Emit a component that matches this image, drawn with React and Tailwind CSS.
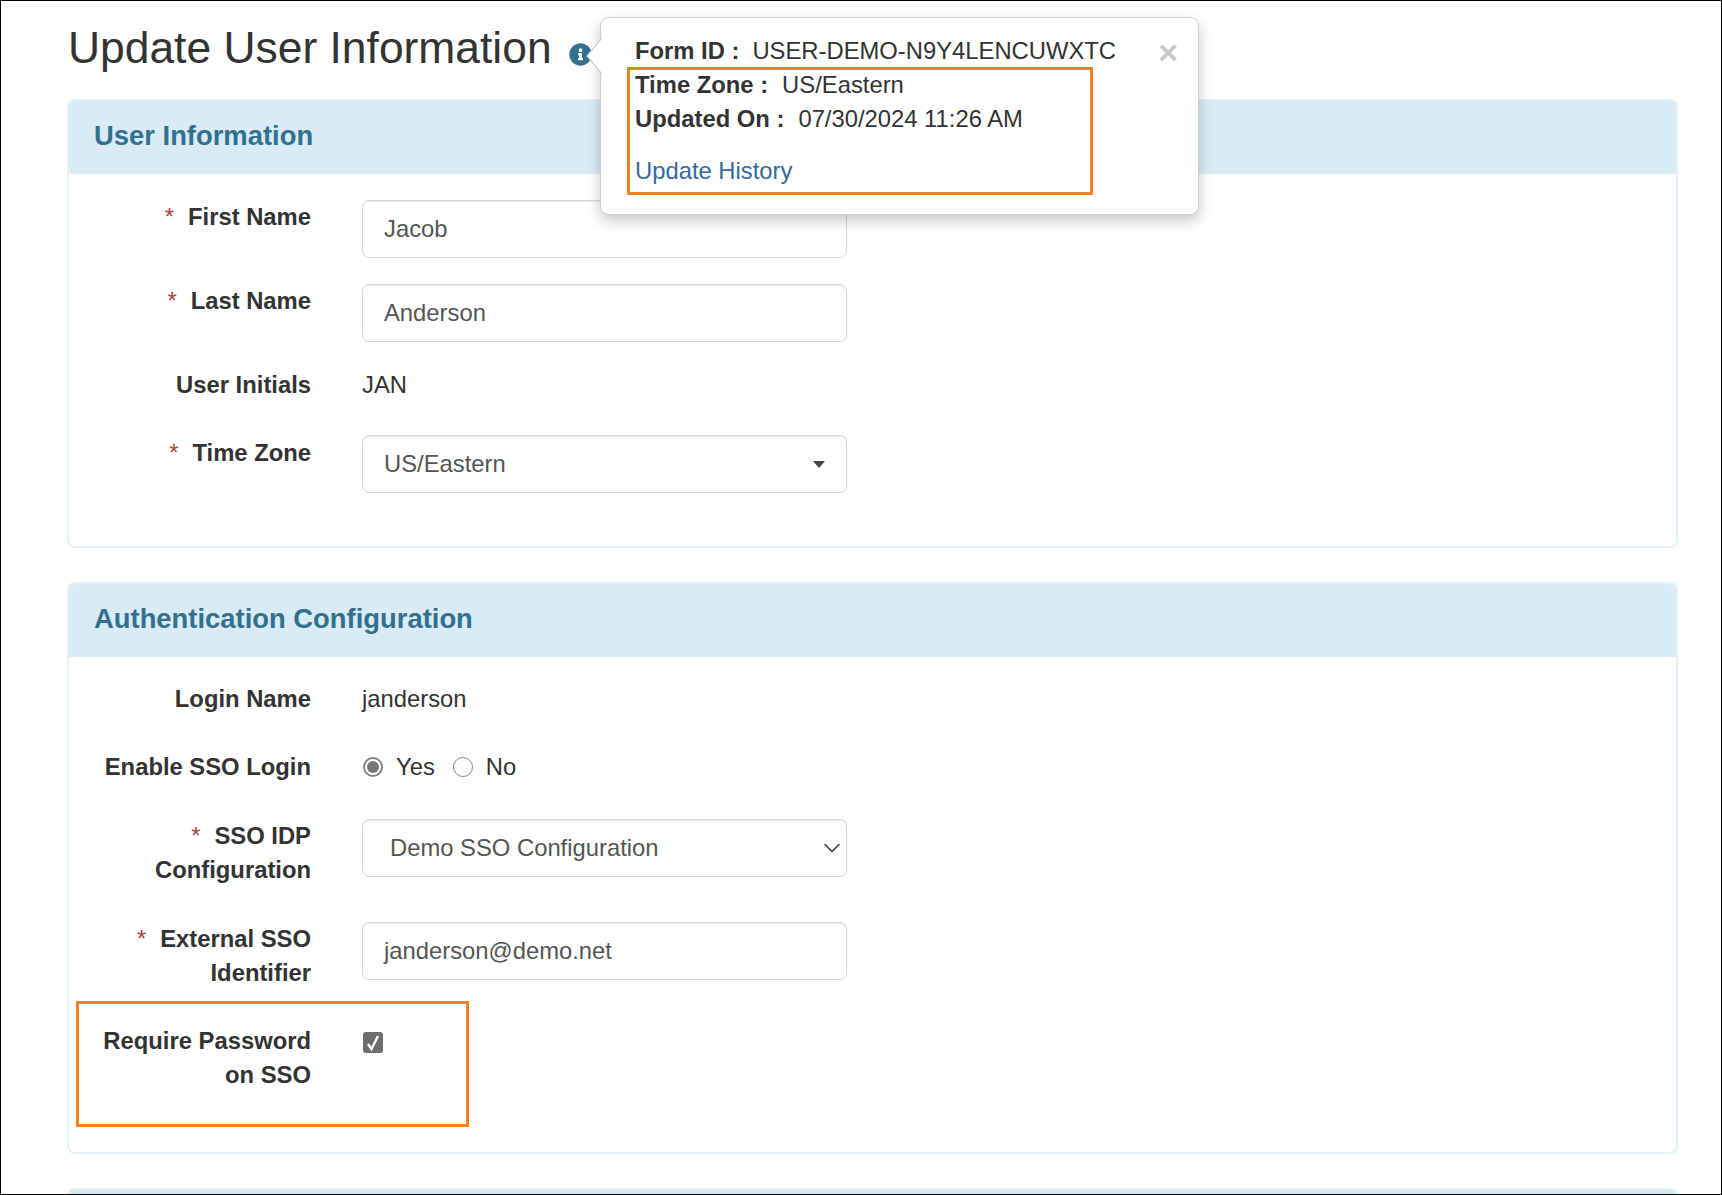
import { FaInfoCircle } from "react-icons/fa";
import { ChevronDown } from "lucide-react";

function Row({ label, required, className, labelClass, children }) {
  return (
    <div className={`flex items-start ${className}`}>
      <div className={`w-[242px] shrink-0 text-right font-bold leading-[34px] text-[#333] ${labelClass}`}>
        {required && <span className="mr-[14px] font-normal text-[#a94442]">*</span>}
        {label}
      </div>
      <div className="ml-[51px] w-[485px]">{children}</div>
    </div>
  );
}

function Field({ children, className }) {
  return (
    <div
      className={`flex h-[58px] items-center rounded-[7px] border border-[#d6d6d6] bg-white text-[#555] shadow-[inset_0_1px_1px_rgba(0,0,0,0.075)] ${className}`}
    >
      {children}
    </div>
  );
}

function Panel({ title, className, bodyClass, children }) {
  return (
    <section
      className={`overflow-hidden rounded-[8px] border-2 border-[#e2f1f6] ${className}`}
    >
      <div className="flex h-[73px] items-center bg-[#d9ecf6] pb-[3px] pl-[25px] text-[27.4px] font-bold text-[#31708f]">
        {title}
      </div>
      <div className={bodyClass}>{children}</div>
    </section>
  );
}

function Radio({ checked }) {
  return (
    <span
      className={`flex h-[20px] w-[20px] items-center justify-center rounded-full border-[#858585] bg-white ${
        checked ? "border-2" : "border-[1.5px]"
      }`}
    >
      {checked && <span className="h-[12px] w-[12px] rounded-full bg-[#777]" />}
    </span>
  );
}

export default function App() {
  return (
    <div className="relative h-[1195px] w-[1722px] overflow-hidden border border-black bg-white font-['Liberation_Sans',Arial,sans-serif] text-[23.8px] text-[#333]">
      <div className="pl-[66px] pr-[43px]">
        <div className="flex h-[98px] items-start pt-[21px]">
          <h1 className="ml-px text-[44.4px] leading-[52px] text-[#333]">
            Update User Information
          </h1>
          <FaInfoCircle className="ml-[17px] mt-[21px] text-[23px] text-[#31708f]" />
        </div>

        <Panel title="User Information" bodyClass="pt-[26px] h-[373px]" className="h-[449px]">
          <Row label="First Name" required className="mb-[26px]">
            <Field className="pl-[21px]">Jacob</Field>
          </Row>
          <Row label="Last Name" required className="mb-[25px]">
            <Field className="pl-[21px]">Anderson</Field>
          </Row>
          <Row label="User Initials" labelClass="pt-px" className="mb-[33px]">
            <div className="leading-[35px]">JAN</div>
          </Row>
          <Row label="Time Zone" required labelClass="pt-px">
            <Field className="justify-between pl-[21px] pr-[21px] text-[#444]">
              US/Eastern
              <span className="h-0 w-0 border-x-[6px] border-t-[7px] border-x-transparent border-t-[#444]" />
            </Field>
          </Row>
        </Panel>

        <Panel
          title="Authentication Configuration"
          bodyClass="pt-[24px]"
          className="mt-[34px] h-[572px]"
        >
          <Row label="Login Name" labelClass="pt-px" className="mb-[33px]">
            <div className="leading-[35px]">janderson</div>
          </Row>
          <Row label="Enable SSO Login" labelClass="pt-px" className="mb-[35px]">
            <div className="flex h-[35px] items-center pl-px">
              <Radio checked />
              <span className="ml-[13px]">Yes</span>
              <span className="ml-[18px]">
                <Radio />
              </span>
              <span className="ml-[13px]">No</span>
            </div>
          </Row>
          <Row label="SSO IDP Configuration" required className="mb-[35px]">
            <Field className="justify-between pl-[27px]">
              Demo SSO Configuration
              <ChevronDown size={28} strokeWidth={1.5} className="text-[#444]" />
            </Field>
          </Row>
          <Row label="External SSO Identifier" required className="mb-[34px]">
            <Field className="pl-[21px]">janderson@demo.net</Field>
          </Row>
          <Row label="Require Password on SSO">
            <div className="ml-px mt-[8px] flex h-[21px] w-[20px] items-center justify-center rounded-[3px] bg-[#6e6e6e]">
              <svg width="14" height="17" viewBox="0 0 14 17" fill="none">
                <path d="M2 10 L5.5 15 L12 2" stroke="white" strokeWidth="2.4" />
              </svg>
            </div>
          </Row>
        </Panel>

        <Panel title="" className="mt-[34px] h-[60px]" />
      </div>

      {/* popover */}
      <div className="absolute left-[599px] top-[16px] h-[198px] w-[599px] rounded-[9px] border border-[#cfcfcf] bg-white pl-[34px] pt-[16px] leading-[34px] shadow-[0_6px_14px_rgba(0,0,0,0.22)]">
        <svg className="absolute left-[-15px] top-[19px]" width="16" height="38" viewBox="0 0 16 38">
          <polygon points="1,19 16,1 16,37" fill="white" />
          <polyline points="16,1 1,19 16,37" fill="none" stroke="#cfcfcf" strokeWidth="1.2" />
        </svg>
        <div className="relative">
          <div>
            <b className="mr-[13px]">Form ID :</b>USER-DEMO-N9Y4LENCUWXTC
          </div>
          <div>
            <b className="mr-[14px]">Time Zone :</b>US/Eastern
          </div>
          <div>
            <b className="mr-[14px]">Updated On :</b>07/30/2024 11:26 AM
          </div>
          <div className="mt-[18px] text-[#36689f]">Update History</div>
        </div>
        <span className="absolute right-[20px] top-[12px] text-[34px] font-bold leading-[44px] text-[#c8c8c8]">
          ×
        </span>
      </div>

      {/* callouts */}
      <div className="absolute left-[626px] top-[66px] h-[128px] w-[466px] border-[3px] border-[#f58220]" />
      <div className="absolute left-[75px] top-[1000px] h-[126px] w-[393px] border-[3px] border-[#f58220]" />
    </div>
  );
}
